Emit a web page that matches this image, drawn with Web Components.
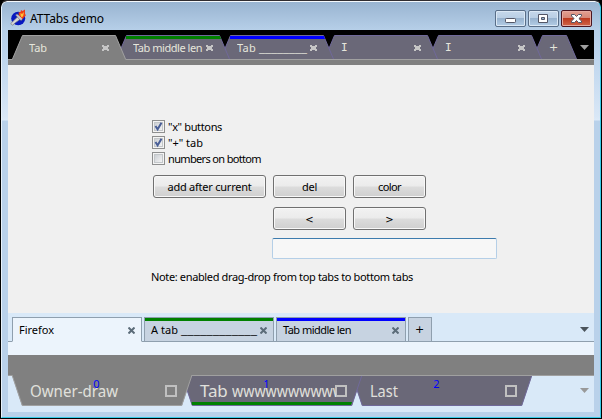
<!DOCTYPE html>
<html lang="en"><head><meta charset="utf-8"><title>ATTabs demo</title>
<style>
html,body{margin:0;width:602px;height:419px;overflow:hidden;background:#000}
body{font:11px/14px "Noto Sans","DejaVu Sans",sans-serif;color:#000}
</style></head><body>
<demo-window>
  <title-bar slot="title"><fit-text w="74">ATTabs demo</fit-text></title-bar>
  <angled-strip></angled-strip>
  <demo-form></demo-form>
  <square-strip></square-strip>
  <drawn-strip></drawn-strip>
</demo-window>
<script>
const define = (name, html, setup) => customElements.define(name, class extends HTMLElement {
  connectedCallback() {
    if (this.shadowRoot) return;
    const t = document.createElement('template');
    t.innerHTML = typeof html === 'function' ? html(this) : html;
    this.attachShadow({mode:'open'}).append(t.content.cloneNode(true));
    if (setup) setup(this);
  }
});

define('close-mark', `<style>:host{display:block;flex:none;width:7px;height:6px;white-space:normal}svg{display:block}</style>
<svg width="7" height="6" shape-rendering="crispEdges" fill="currentColor"><path d="M0 0h2v1h3v-1h2v2h-1v2h1v2h-2v-1h-3v1h-2v-2h1v-2h-1z"/></svg>`);
define('cross-mark', `<style>:host{display:block;flex:none;width:7px;height:7px}svg{display:block}</style>
<svg width="7" height="7" stroke="currentColor" stroke-width="2"><path d="M.5 .5 6.5 6.5M6.5 .5 .5 6.5"/></svg>`);
define('drop-arrow', `<style>:host{display:block;flex:none;width:9px;height:5px}svg{display:block}</style>
<svg width="9" height="5" fill="currentColor"><path d="M0 0h9L4.5 5z"/></svg>`);

define('demo-window', `<style>
:host{display:flex;flex-direction:column;box-sizing:border-box;width:602px;height:419px;border:1px solid #000;border-top-color:#302c30;border-radius:7px 7px 0 0;overflow:hidden}
.f{display:flex;flex-direction:column;box-sizing:border-box;flex:1;padding:0 6px 5px;border:1px solid #f4f8fc;border-right-color:#37cbe8;border-bottom-color:#37cbe8;border-left-color:#e8f2fb;border-radius:6px 6px 0 0;
background:linear-gradient(#99b4d1 0,#b6cfe8 28px,#bcd4ed 50px,#d9e7f6 115px,#dceaf8 118px,#b9d1ea 119px)}
.c{display:flex;flex-direction:column;flex:1}
</style><div class="f"><slot name="title"></slot><div class="c"><slot></slot></div></div>`);

define('title-bar', `<style>
:host{display:flex;height:28px;font-size:12px;flex:none}
svg{display:block}.i{margin:7px 3px 0 2px}.t{flex:1;padding-top:10px;color:#000}
.b{display:flex;gap:2px;padding:8px 2px 0 0}
</style><svg class="i" width="17" height="17" viewBox="0 0 17 17"><ellipse cx="8.2" cy="9.5" rx="7" ry="6.8" fill="#0718c0"/>
<path d="M.8 14.500 8 7.500 10.500 10 5 14 2.500 16.300z" fill="#d8d8d8" stroke="#777" stroke-width=".7"/><path d="M5.500 6 7 5 13 9 11.500 11.500 10 11z" fill="#c7c7d0" stroke="#556" stroke-width=".5"/>
<path d="M9 6.500 8.500 3.500 10.500 3 11 1l1.500 1L15 .5v4l.8 2-3.300 3.500z" fill="#ed3d17"/><path d="m10.500 6.500 0-2.500 1.500 1 2-2-.8 4-1.500 1.500z" fill="#ffc43a"/></svg>
<div class="t"><slot></slot></div>
<div class="b"><caption-button kind="min"></caption-button><caption-button kind="max"></caption-button><caption-button kind="close"></caption-button></div>`);

define('caption-button', el => {
  const k = el.getAttribute('kind'), red = k === 'close';
  const g = {min:'<rect x="10.5" y="8.5" width="10" height="4" rx=".8" fill="#fff" stroke="#535666"/>',
    max:'<path d="M10.5 4.5h9v8h-9zM13.5 7.5h3v2h-3z" fill="#fff" fill-rule="evenodd" stroke="#535666"/>',
    close:'<path d="M10.5 4.5h3l2 2 2-2h3v1.5l-2.6 2.6 2.6 2.4v1.5h-3l-2-2-2 2h-3V11l2.6-2.4L10.5 6z" fill="#fff" stroke="#535666"/>'}[k];
  return `<style>:host{display:block;box-sizing:border-box;width:31px;height:17px;border-radius:2px;border:1px solid ${red?'#4b1520':'#596e88'};
  box-shadow:inset 0 0 0 1px ${red?'#e5aaa1':'#dbe8f5'};background:${red?'linear-gradient(#e3a092,#d58778 46%,#bd3a20 50%,#cf6549)':'linear-gradient(#c6d8eb,#b9cee4 46%,#98b3cf 50%,#b3cde6)'}}svg{display:block;margin:-1px}</style><svg width="31" height="17">${g}</svg>`;
});

/* Trapezoid tab of the dark strip, narrow side up */
define('angled-tab', el => {
  const w = +el.getAttribute('w'), on = el.hasAttribute('active'), c = el.getAttribute('mark'), plus = el.hasAttribute('plus');
  return `<style>:host{display:grid;flex:none;width:${w}px;height:25px;margin-right:-10px;position:relative;z-index:${el.getAttribute('z')};color:#e6e6dc}
  svg,.r{grid-area:1/1}svg{display:block}.r{display:flex;width:${w}px;box-sizing:border-box;padding:6px ${plus?0:17}px 0 17px;overflow:hidden;white-space:pre}
  .t{flex:1;overflow:hidden;display:flex}close-mark{color:#c6c6c6;margin-top:4px;margin-left:2px}</style>
  <svg width="${w}" height="25"><path d="M0 25 10.5 .5H${w-10.5}L${w} 25z" fill="${on?'#808080':'#6a6878'}"/>
  <path d="M.3 24.5 10.5 .5H${w-10.5}L${w-.3} 24.5" fill="none" stroke="${on?'#a0a0a0':'#70699a'}"/>
  ${c?`<path d="M10 1H${w-10}l1 3H10z" fill="${c}"/>`:''}${on?'':`<path d="M0 24.5H${w}" stroke="#a0a0a0"/>`}</svg>
  <div class="r"><div class="t"><slot></slot></div>${plus?'':'<close-mark></close-mark>'}</div>`;
});
define('angled-strip', `<style>:host{display:block;height:35px;flex:none;background:#000;color:#a0a0a0}
.row{display:flex;box-sizing:border-box;height:30px;padding:5px 5px 0 4px;background:linear-gradient(#a0a0a0,#a0a0a0) 0 29px/100% 1px no-repeat}.g{height:5px;background:#808080}
.i{font:11px/14px "DejaVu Sans Mono",monospace}drop-arrow{margin:10px 0 0 auto}.p{font:11px/14px "DejaVu Sans",sans-serif}</style>
<div class="row"><angled-tab w="114" z="6" active><fit-text w="18">Tab</fit-text></angled-tab>
<angled-tab w="114" z="5" mark="#008000"><fit-text w="69">Tab middle len</fit-text></angled-tab>
<angled-tab w="114" z="4" mark="#0000ff"><fit-text w="22">Tab </fit-text><fit-text w="48" stretch>________</fit-text></angled-tab>
<angled-tab w="114" z="3"><span class="i">I</span></angled-tab><angled-tab w="114" z="2"><span class="i">I</span></angled-tab>
<angled-tab w="45" z="1" plus><span class="p">+</span></angled-tab><drop-arrow></drop-arrow></div><div class="g"></div>`);

define('check-row', el => `<style>:host{display:flex;height:16px;align-items:flex-start}svg{display:block;margin:1px 3px 0 0}.t{padding-top:1px}</style>
<svg width="13" height="13"><defs><linearGradient id="g" x2="1" y2="1"><stop stop-color="#c9cdd2"/><stop offset="1" stop-color="#f6f6f6"/></linearGradient></defs><rect x=".5" y=".5" width="12" height="12" fill="#f4f4f4" stroke="#8e8f8f"/><rect x="2.5" y="2.5" width="8" height="8" fill="url(#g)" stroke="#c3c7ca"/>
${el.hasAttribute('on')?'<path d="M3.5 6 5.6 9.3 9.5 2.7" fill="none" stroke="#4a5f97" stroke-width="2"/>':''}</svg><div class="t"><slot></slot></div>`);
define('push-button', el => `<style>:host{display:flex;justify-content:center;box-sizing:border-box;width:${el.getAttribute('w')}px;height:23px;padding-top:4px;border:1px solid #707070;border-radius:3px;box-shadow:inset 0 0 0 1px #f8f8f8;background:linear-gradient(#f2f2f2,#ebebeb 48%,#dcdcdc 52%,#cfcfcf)}</style><slot></slot>`);
define('demo-form', `<style>:host{display:block;box-sizing:border-box;height:248px;flex:none;background:#f0f0f0;padding:54px 0 0 144px}
.b{display:grid;grid-template-columns:113px 73px 73px;column-gap:7px;row-gap:9px;margin:8px 0 0 1px}.b>:nth-child(4){grid-column:2}
.e{box-sizing:border-box;width:225px;height:21px;margin:8px 0 0 120px;border:1px solid #b5cfe7;border-top-color:#3d7bad;border-radius:2px;background:#f7f7f7}.n{margin:11px 0 0 -1px}.s{font:10px/15px "DejaVu Sans"}</style>
<check-row on><fit-text w="54">"x" buttons</fit-text></check-row><check-row on><fit-text w="35">"+" tab</fit-text></check-row><check-row><fit-text w="93">numbers on bottom</fit-text></check-row>
<div class="b"><push-button w="113"><fit-text w="84">add after current</fit-text></push-button><push-button w="73"><fit-text w="15">del</fit-text></push-button><push-button w="73"><fit-text w="23">color</fit-text></push-button>
<push-button w="73"><span class="s">&lt;</span></push-button><push-button w="73"><span class="s">&gt;</span></push-button></div>
<div class="e"></div><div class="n"><fit-text w="262">Note: enabled drag-drop from top tabs to bottom tabs</fit-text></div>`);

define('square-tab', el => {
  const on = el.hasAttribute('active'), c = el.getAttribute('mark');
  return `<style>:host{display:flex;flex:none;box-sizing:border-box;width:${el.getAttribute('w')}px;height:25px;border:1px solid #8f9fae;${on?'border-bottom-color:#ecf4fc;':''}background:${c?`linear-gradient(${c},${c}) 0 0/100% 3px no-repeat,`:''}${on?'#ecf4fc':'#c7d3e1'};padding:5px 6px 0;color:#000}
  .t{display:flex;flex:1}cross-mark{color:#5c6c79;margin-top:4px}</style><div class="t"><slot></slot></div>${el.hasAttribute('plus')?'':'<cross-mark></cross-mark>'}`;
});
define('square-strip', `<style>:host{display:block;flex:none;height:42px;background:#ecf4fc;color:#4b545c}
.row{display:flex;gap:2px;box-sizing:border-box;height:29px;padding:4px 5px 0 4px;background:linear-gradient(#8f9fae,#8f9fae) 0 28px/100% 1px no-repeat,#d9e9f8}drop-arrow{margin:10px 0 0 auto}.p{font:11px/14px "DejaVu Sans"}</style>
<div class="row"><square-tab w="130" active><fit-text w="35">Firefox</fit-text></square-tab>
<square-tab w="130" mark="#008000"><fit-text w="30">A tab </fit-text><fit-text w="76" stretch>____________</fit-text></square-tab>
<square-tab w="130" mark="#0000ff"><fit-text w="68">Tab middle len</fit-text></square-tab><square-tab w="24" plus><span class="p">+</span></square-tab><drop-arrow></drop-arrow></div>`);

/* Large tab hanging under its strip, with a centred index and a box as its close button */
define('drawn-tab', el => {
  const on = el.hasAttribute('active'), c = el.getAttribute('mark');
  return `<style>:host{display:grid;flex:none;width:180px;height:31px;margin-right:-10px;position:relative;z-index:${el.getAttribute('z')};font:17px/24px "Noto Sans",sans-serif;color:#e0e0dc}
  svg.s,.t,.x,.n{grid-area:1/1}svg{display:block}.t{display:flex;padding:4px 0 0 18px;width:154px;box-sizing:border-box;overflow:hidden;white-space:nowrap}.x{margin:10px 0 0 153px}
  .n{font:11px/12px "Noto Sans",sans-serif;color:#00f;justify-self:center;margin-left:-11px;padding-top:3px}</style>
  <svg class="s" width="180" height="31"><path d="M0 0 10 30.5H170L180 0z" fill="${on?'#808080':'#6a6878'}"/>
  <path d="M0 0 10.3 30.5H169.7L180 0" fill="none" stroke="${on?'#a0a0a0':'#70699a'}"/>${c?`<path d="M9.5 27H170l-1 3H10z" fill="${c}"/>`:''}${on?'':'<path d="M0 .5H180" stroke="#a0a0a0"/>'}</svg>
  <div class="t"><slot></slot></div><svg class="x" width="12" height="12"><rect x="1" y="1" width="10" height="10" fill="${on?'#808080':'#6a6878'}" stroke="#c0c0c0" stroke-width="2"/></svg><div class="n">${el.getAttribute('n')}</div>`;
});
define('drawn-strip', `<style>:host{display:block;flex:1;background:#d9e9f8;color:#999}.g{height:20px;background:#808080}
.row{display:flex;padding:0 5px 0 4px;background:linear-gradient(#a0a0a0,#a0a0a0) 0 0/100% 1px no-repeat}drop-arrow{margin:13px 0 0 auto}</style>
<div class="g"></div><div class="row"><drawn-tab n="0" z="3" active><fit-text w="88" stretch>Owner-draw</fit-text></drawn-tab>
<drawn-tab n="1" z="2" mark="#008000"><fit-text w="32">Tab </fit-text><fit-text w="112" stretch>wwwwwwwwww</fit-text></drawn-tab><drawn-tab n="2" z="1"><fit-text w="28" stretch>Last</fit-text></drawn-tab><drop-arrow></drop-arrow></div>`);

/* Text run set to an exact width: by tracking, or by stretching the glyphs.
   Registered last, so that each run already has the font of its container when measured. */
define('fit-text', `<style>:host{display:inline-block;white-space:pre;flex:none;transform-origin:0 50%}</style><slot></slot>`, el => {
  const w = +el.getAttribute('w'), n = el.getBoundingClientRect().width;
  if (!w || !n) return;
  if (el.hasAttribute('stretch')) { el.style.transform = `scaleX(${w / n})`; el.style.width = n + 'px'; el.style.marginRight = w - n + 'px'; }
  else { el.style.letterSpacing = (w - n) / el.textContent.length + 'px'; }
});
</script></body></html>
